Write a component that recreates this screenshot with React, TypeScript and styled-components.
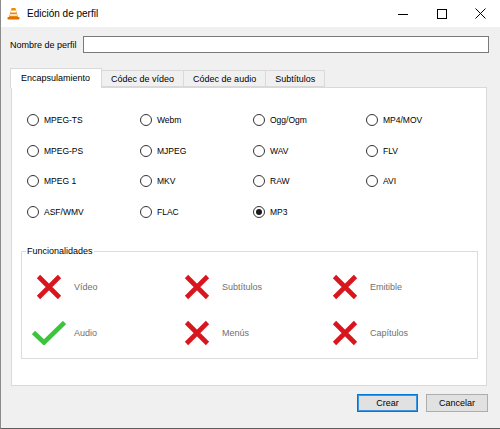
import React from "react";
import styled, { createGlobalStyle } from "styled-components";

const GlobalStyle = createGlobalStyle`
  html, body {
    margin: 0;
    padding: 0;
    background: #ffffff;
  }
  body {
    font-family: "Liberation Sans", Arial, sans-serif;
    color: #000;
  }
  * {
    box-sizing: border-box;
  }
`;

const containers = [
  ["MPEG-TS", "Webm", "Ogg/Ogm", "MP4/MOV"],
  ["MPEG-PS", "MJPEG", "WAV", "FLV"],
  ["MPEG 1", "MKV", "RAW", "AVI"],
  ["ASF/WMV", "FLAC", "MP3", ""],
];

const features = [
  { label: "Vídeo", ok: false },
  { label: "Subtítulos", ok: false },
  { label: "Emitible", ok: false },
  { label: "Audio", ok: true },
  { label: "Menús", ok: false },
  { label: "Capítulos", ok: false },
];

const tabs = ["Encapsulamiento", "Códec de vídeo", "Códec de audio", "Subtítulos"];

const VlcCone = () => (
  <svg width="13" height="13" viewBox="0 0 13 13">
    <path d="M4.6 1 L8.4 1 L11 10 L2 10 Z" fill="#f08a00" />
    <path d="M4.1 3.4 L8.9 3.4 L9.5 5.6 L3.5 5.6 Z" fill="#ffffff" />
    <path d="M3.2 7.2 L9.8 7.2 L10.3 8.8 L2.7 8.8 Z" fill="#ffffff" />
    <rect x="0.5" y="10" width="12" height="2.6" rx="0.8" fill="#e06f00" />
  </svg>
);

const CrossIcon = () => (
  <svg width="26" height="26" viewBox="0 0 26 26">
    <path d="M2.5 2.5 L23.5 23.5 M23.5 2.5 L2.5 23.5" stroke="#d7161d" strokeWidth="4.6" />
  </svg>
);

const CheckIcon = () => (
  <svg width="34" height="24" viewBox="0 0 34 24">
    <path d="M1.5 11.5 L12 21.5 L32.5 1.5" stroke="#3cc43c" strokeWidth="4.6" fill="none" />
  </svg>
);

const App = () => {
  return (
    <>
      <GlobalStyle />
      <Window>
        <TitleBar>
          <VlcCone />
          <Title>Edición de perfil</Title>
          <Controls>
            <CtrlButton>
              <svg width="10" height="10" viewBox="0 0 10 10">
                <path d="M0 5.5 H10" stroke="#000" strokeWidth="1" />
              </svg>
            </CtrlButton>
            <CtrlButton>
              <svg width="10" height="10" viewBox="0 0 10 10">
                <rect x="0.5" y="0.5" width="9" height="9" stroke="#000" strokeWidth="1" fill="none" />
              </svg>
            </CtrlButton>
            <CtrlButton>
              <svg width="11" height="11" viewBox="0 0 11 11">
                <path d="M0.5 0.5 L10.5 10.5 M10.5 0.5 L0.5 10.5" stroke="#000" strokeWidth="1" />
              </svg>
            </CtrlButton>
          </Controls>
        </TitleBar>

        <Body>
          <NameRow>
            <NameLabel>Nombre de perfil</NameLabel>
            <NameInput />
          </NameRow>

          <TabWidget>
            <TabBar>
              {tabs.map((t, i) => (
                <Tab key={t} $active={i === 0}>
                  {t}
                </Tab>
              ))}
            </TabBar>
            <Panel>
              <RadioGrid>
                {containers.flat().map((name, i) =>
                  name ? (
                    <RadioItem key={name}>
                      <RadioCircle $checked={name === "MP3"} />
                      <RadioText>{name}</RadioText>
                    </RadioItem>
                  ) : (
                    <span key={"empty" + i} />
                  )
                )}
              </RadioGrid>

              <GroupBox>
                <GroupTitle>Funcionalidades</GroupTitle>
                <FeatureGrid>
                  {features.map((f) => (
                    <Feature key={f.label}>
                      <IconBox>{f.ok ? <CheckIcon /> : <CrossIcon />}</IconBox>
                      <FeatureText>{f.label}</FeatureText>
                    </Feature>
                  ))}
                </FeatureGrid>
              </GroupBox>
            </Panel>
          </TabWidget>

          <Footer>
            <DialogButton $default $width={61}>
              Crear
            </DialogButton>
            <DialogButton $width={62}>Cancelar</DialogButton>
          </Footer>
        </Body>
      </Window>
    </>
  );
};

const Window = styled.div`
  width: 500px;
  height: 429px;
  display: flex;
  flex-direction: column;
  background: #f0f0f0;
  border-left: 1px solid #8c8c8c;
  border-bottom: 1px solid #5e5e5e;
`;

const TitleBar = styled.div`
  height: 27px;
  flex-shrink: 0;
  display: flex;
  align-items: center;
  padding-left: 6px;
  background: #ffffff;
`;

const Title = styled.span`
  margin-left: 7px;
  font-size: 10px;
  color: #000;
`;

const Controls = styled.div`
  margin-left: auto;
  display: flex;
  height: 100%;
`;

const CtrlButton = styled.div`
  width: 39px;
  height: 100%;
  display: flex;
  align-items: center;
  justify-content: center;
`;

const Body = styled.div`
  flex: 1;
  display: flex;
  flex-direction: column;
  padding: 9px 11px 0 9px;
`;

const NameRow = styled.div`
  display: flex;
  align-items: center;
  gap: 6px;
`;

const NameLabel = styled.span`
  font-size: 9px;
`;

const NameInput = styled.div`
  flex: 1;
  height: 17px;
  background: #ffffff;
  border: 1px solid #7a7a7a;
`;

const TabWidget = styled.div`
  margin-top: 15px;
  display: flex;
  flex-direction: column;
`;

const TabBar = styled.div`
  display: flex;
  align-items: flex-end;
  height: 19px;
`;

const Tab = styled.div<{ $active?: boolean }>`
  position: relative;
  z-index: ${(p) => (p.$active ? 1 : 0)};
  height: ${(p) => (p.$active ? "20px" : "17px")};
  margin-bottom: ${(p) => (p.$active ? "-1px" : "0")};
  padding: ${(p) => (p.$active ? "0 11px 0 10px" : "0 9px")};
  display: flex;
  align-items: center;
  padding-bottom: ${(p) => (p.$active ? "2px" : "0")};
  font-size: 9px;
  background: ${(p) => (p.$active ? "#ffffff" : "#f0f0f0")};
  border: 1px solid #d9d9d9;
  border-bottom: ${(p) => (p.$active ? "none" : "1px solid #d9d9d9")};
  margin-left: ${(p) => (p.$active ? "0" : "-1px")};
`;

const Panel = styled.div`
  margin: 0 2px 0 1px;
  height: 299px;
  background: #ffffff;
  border: 1px solid #d9d9d9;
  display: flex;
  flex-direction: column;
`;

const RadioGrid = styled.div`
  display: grid;
  grid-template-columns: repeat(4, 113px);
  grid-auto-rows: 30.5px;
  padding: 17px 0 0 15px;
`;

const RadioItem = styled.div`
  display: flex;
  align-items: center;
  gap: 5px;
`;

const RadioCircle = styled.span<{ $checked?: boolean }>`
  width: 12px;
  height: 12px;
  border-radius: 50%;
  border: 1px solid #333333;
  background: #ffffff;
  display: flex;
  align-items: center;
  justify-content: center;
  &::after {
    content: "";
    width: 6px;
    height: 6px;
    border-radius: 50%;
    background: ${(p) => (p.$checked ? "#1a1a1a" : "transparent")};
  }
`;

const RadioText = styled.span`
  font-size: 8.5px;
`;

const GroupBox = styled.fieldset`
  margin: 19px 8px 0 9px;
  padding: 0;
  border: 1px solid #dcdcdc;
  min-width: 0;
`;

const GroupTitle = styled.legend`
  margin-left: 4px;
  padding: 0 1px;
  font-size: 9px;
`;

const FeatureGrid = styled.div`
  display: grid;
  grid-template-columns: repeat(3, 148px);
  grid-auto-rows: 46px;
  padding: 8px 0 2px 10px;
`;

const Feature = styled.div`
  display: flex;
  align-items: center;
  gap: 8px;
`;

const IconBox = styled.div`
  width: 34px;
  display: flex;
  justify-content: center;
  align-items: center;
`;

const FeatureText = styled.span`
  font-size: 9px;
  color: #707070;
`;

const Footer = styled.div`
  display: flex;
  justify-content: flex-end;
  gap: 8px;
  padding: 8px 1px 0 0;
`;

const DialogButton = styled.div<{ $default?: boolean; $width: number }>`
  width: ${(p) => p.$width}px;
  height: 18px;
  display: flex;
  align-items: center;
  justify-content: center;
  font-size: 9px;
  background: #e1e1e1;
  border: 1px solid ${(p) => (p.$default ? "#0078d7" : "#adadad")};
  box-shadow: ${(p) => (p.$default ? "inset 0 0 0 1px #3c95dd" : "none")};
`;

export default App;
